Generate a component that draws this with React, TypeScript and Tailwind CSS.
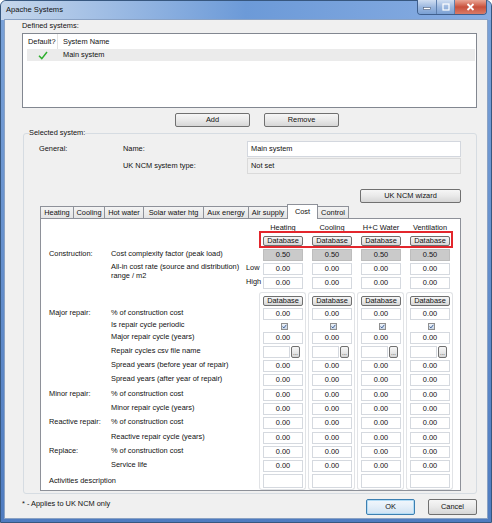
import React from 'react';

type Kind = 'header' | 'db' | 'gray' | 'val' | 'check' | 'file' | 'empty';
type Group = 'top' | 'mid' | 'bottom' | undefined;

interface CostRow {
  h: string;
  kind: Kind;
  l1?: string;
  l2?: string;
  side?: string;
  wrap?: boolean;
  group?: Group;
}

const columns = ['Heating', 'Cooling', 'H+C Water', 'Ventilation'];

// row heights follow the dialog's 14px rhythm, a few rows are a touch taller
const rows: CostRow[] = [
  { h: 'h-[14px]', kind: 'header' },
  { h: 'h-[13px]', kind: 'db' },
  { h: 'h-[14px]', kind: 'gray', l1: 'Construction:', l2: 'Cost complexity factor (peak load)' },
  { h: 'h-[14px]', kind: 'val', l2: 'All-in cost rate (source and distribution) range / m2', side: 'Low', wrap: true },
  { h: 'h-[14px]', kind: 'val', side: 'High' },
  { h: 'h-[15px] mt-[2px]', kind: 'db', group: 'top' },
  { h: 'h-[14px]', kind: 'val', l1: 'Major repair:', l2: '% of construction cost', group: 'mid' },
  { h: 'h-[10px]', kind: 'check', l2: 'Is repair cycle periodic', group: 'mid' },
  { h: 'h-[14px]', kind: 'val', l2: 'Major repair cycle (years)', group: 'mid' },
  { h: 'h-[14px]', kind: 'file', l2: 'Repair cycles csv file name', group: 'mid' },
  { h: 'h-[14.3px]', kind: 'val', l2: 'Spread years (before year of repair)', group: 'mid' },
  { h: 'h-[14.3px]', kind: 'val', l2: 'Spread years (after year of repair)', group: 'mid' },
  { h: 'h-[14.3px]', kind: 'val', l1: 'Minor repair:', l2: '% of construction cost', group: 'mid' },
  { h: 'h-[14.3px]', kind: 'val', l2: 'Minor repair cycle (years)', group: 'mid' },
  { h: 'h-[14.3px]', kind: 'val', l1: 'Reactive repair:', l2: '% of construction cost', group: 'mid' },
  { h: 'h-[14.3px]', kind: 'val', l2: 'Reactive repair cycle (years)', group: 'mid' },
  { h: 'h-[14.3px]', kind: 'val', l1: 'Replace:', l2: '% of construction cost', group: 'mid' },
  { h: 'h-[14.3px]', kind: 'val', l2: 'Service life', group: 'mid' },
  { h: 'h-[16.6px]', kind: 'empty', l1: 'Activities description', group: 'bottom' },
];

function WinButton({ className = '', children }: { className?: string; children: React.ReactNode }) {
  return (
    <div
      className={`flex items-center justify-center rounded-[2px] border border-[#707070] bg-linear-to-b from-[#f6f6f6] via-[#e9e9e9] to-[#d6d6d6] ${className}`}
    >
      {children}
    </div>
  );
}

function CheckBox() {
  return (
    <div className="flex h-[7px] w-[7px] items-center justify-center border border-[#8f8f8f] bg-linear-to-b from-[#eef3f9] to-[#c8d5e6]">
      <svg width="5" height="5" viewBox="0 0 5 5">
        <path d="M0.6 2.6 L1.9 3.9 L4.4 0.8" stroke="#2b4f8c" strokeWidth="0.9" fill="none" />
      </svg>
    </div>
  );
}

function CellContent({ kind, col }: { kind: Kind; col: number }) {
  if (kind === 'header') {
    return <div className="w-[40px] whitespace-nowrap text-center">{columns[col]}</div>;
  }
  if (kind === 'db') {
    return <WinButton className="h-[10px] w-[40px]">Database</WinButton>;
  }
  if (kind === 'gray') {
    return (
      <div className="flex h-[12px] w-[40px] items-center justify-center border border-[#bdbdbd] bg-[#cacaca]">0.50</div>
    );
  }
  if (kind === 'val') {
    return (
      <div className="flex h-[12px] w-[40px] items-center justify-center border border-[#d5d9df] bg-white">0.00</div>
    );
  }
  if (kind === 'check') {
    return (
      <div className="flex w-[40px] justify-center pl-[3px]">
        <CheckBox />
      </div>
    );
  }
  if (kind === 'file') {
    return (
      <div className="flex w-[40px] items-center">
        <div className="h-[12px] w-[27px] border border-[#d5d9df] bg-white" />
        <WinButton className="ml-[1px] h-[12px] w-[9px] items-end pb-[1px] text-[6px] leading-none">...</WinButton>
      </div>
    );
  }
  return <div className="h-[14px] w-[40px] border border-[#d5d9df] bg-white" />;
}

function Cell({ row, col }: { row: CostRow; col: number }) {
  const content = <CellContent kind={row.kind} col={col} />;
  if (row.group === 'top') {
    return (
      <div className="mr-[2px] flex h-full w-[47px] items-start rounded-t-[3px] border-x border-t border-[#e1e3e6] pl-[3px] pt-[3px]">
        {content}
      </div>
    );
  }
  if (row.group === 'mid') {
    return (
      <div className="mr-[2px] flex h-full w-[47px] items-center border-x border-[#e1e3e6] pl-[3px]">{content}</div>
    );
  }
  if (row.group === 'bottom') {
    return (
      <div className="mr-[2px] flex h-full w-[47px] items-center rounded-b-[3px] border-x border-b border-[#e1e3e6] pl-[3px]">
        {content}
      </div>
    );
  }
  if (row.kind === 'db') {
    return <div className="mr-[2px] flex h-full w-[47px] items-start pl-[4px] pt-[1px]">{content}</div>;
  }
  return <div className="mr-[2px] flex h-full w-[47px] items-center pl-[4px]">{content}</div>;
}

function CostPanel() {
  return (
    <div className="relative ml-[1px] w-[421px] border border-[#8e9199] bg-white pl-[8px] pt-[2px]">
      {rows.map((row, i) => (
        <div key={i} className={`flex ${row.h}`}>
          <div className="flex w-[62px] shrink-0 items-center whitespace-nowrap pb-[2px]">{row.l1}</div>
          {row.wrap ? (
            <div className="w-[135px] shrink-0 self-start pt-[1px] leading-[8.5px]">{row.l2}</div>
          ) : (
            <div className="flex w-[135px] shrink-0 items-center whitespace-nowrap pb-[2px]">{row.l2}</div>
          )}
          <div className="flex w-[13px] shrink-0 items-center pb-[2px]">{row.side}</div>
          {columns.map((_, c) => (
            <Cell key={c} row={row} col={c} />
          ))}
        </div>
      ))}
      {/* highlight drawn round the first Database buttons */}
      <div className="pointer-events-none absolute left-[218px] top-[12px] h-[17px] w-[194px] border-2 border-[#e3262c]" />
    </div>
  );
}

const tabs = [
  { name: 'Heating', w: 'w-[34px]' },
  { name: 'Cooling', w: 'w-[32px]' },
  { name: 'Hot water', w: 'w-[40px]' },
  { name: 'Solar water htg', w: 'w-[61px]' },
  { name: 'Aux energy', w: 'w-[46px]' },
  { name: 'Air supply', w: 'w-[40px]' },
  { name: 'Cost', w: 'w-[31px]', active: true },
  { name: 'Control', w: 'w-[32px]' },
];

function TabStrip() {
  return (
    <div className="ml-[1px] mt-[1px] flex h-[14px] items-end">
      {tabs.map((t, i) =>
        t.active ? (
          <div
            key={t.name}
            className={`relative z-10 -mb-[1px] -ml-px flex h-[15px] items-start justify-center border border-b-0 border-[#8e9199] bg-white pt-[2px] ${t.w}`}
          >
            {t.name}
          </div>
        ) : (
          <div
            key={t.name}
            className={`flex h-[12px] items-center justify-center border border-b-0 border-[#8e9199] bg-linear-to-b from-[#f4f4f4] to-[#e4e4e4] whitespace-nowrap ${i > 0 ? '-ml-px' : ''} ${t.w}`}
          >
            {t.name}
          </div>
        )
      )}
    </div>
  );
}

function TitleButtons() {
  return (
    <div className="-mt-[1px] flex h-[15px] overflow-hidden rounded-b-[4px] border border-t-0 border-[#3f5f8d]">
      <div className="flex w-[19px] items-center justify-center border-r border-[#5d7fae] bg-linear-to-b from-[#d0def2] via-[#9cb8df] to-[#7aa0d4]">
        <svg width="8" height="8" viewBox="0 0 8 8">
          <rect x="0.5" y="4.5" width="7" height="2" fill="#fff" stroke="#4b5d78" strokeWidth="0.6" />
        </svg>
      </div>
      <div className="flex w-[18px] items-center justify-center border-r border-[#5d7fae] bg-linear-to-b from-[#d0def2] via-[#9cb8df] to-[#7aa0d4]">
        <svg width="8" height="8" viewBox="0 0 8 8">
          <rect x="1" y="1" width="6" height="6" fill="none" stroke="#fff" strokeWidth="1.2" />
        </svg>
      </div>
      <div className="flex w-[31px] items-center justify-center bg-linear-to-b from-[#e9a696] via-[#c8503c] to-[#d97a66]">
        <svg width="9" height="8" viewBox="0 0 9 8">
          <path d="M1.5 1 L7.5 7 M7.5 1 L1.5 7" stroke="#fff" strokeWidth="1.8" />
        </svg>
      </div>
    </div>
  );
}

export default function App() {
  return (
    <div className="h-[523px] w-[492px] overflow-hidden font-['Liberation_Sans',Arial,sans-serif] text-[7.4px] leading-[10px] text-[#111]">
      <div className="flex h-full flex-col rounded-t-[6px] border border-[#37577f] bg-linear-to-b from-[#7aa2d8] to-[#4f7cc0] px-[4px] pb-[4px]">
        {/* Title bar */}
        <div className="-mx-[4px] flex h-[19px] items-start justify-between rounded-t-[5px] bg-linear-to-r from-[#c6d7ec] via-[#6c9ad8] to-[#88ade2] pl-[5px] pr-[4px]">
          <div className="mt-[4px] text-[7.6px]">Apache Systems</div>
          <TitleButtons />
        </div>

        {/* Client area */}
        <div className="flex flex-1 flex-col bg-[#f0f0f0] ring-1 ring-[#8aa2c4]">
          <div className="ml-[17px] mt-[1px]">Defined systems:</div>
          <div className="ml-[17px] mt-[2px] h-[75px] w-[455px] border border-[#828790] bg-white">
            <div className="flex h-[15px] items-center">
              <div className="flex h-full w-[35px] items-center border-r border-[#e3e3e3] pl-[5px]">Default?</div>
              <div className="pl-[5px]">System Name</div>
            </div>
            <div className="ml-[4px] mr-[1px] flex h-[12px] items-center bg-[#ebebeb]">
              <div className="flex w-[31px] justify-center">
                <svg width="10" height="9" viewBox="0 0 10 9">
                  <path d="M1 4.8 L3.8 7.6 L9 1" stroke="#2dae2d" strokeWidth="1.5" fill="none" />
                </svg>
              </div>
              <div className="pl-[5px]">Main system</div>
            </div>
          </div>

          <div className="ml-[170px] mt-[5px] flex">
            <WinButton className="h-[14px] w-[75px]">Add</WinButton>
            <WinButton className="ml-[14px] h-[14px] w-[75px]">Remove</WinButton>
          </div>

          <fieldset className="ml-[18px] mt-[1px] w-[454px] rounded-[3px] border border-[#d6dce2]">
            <legend className="ml-[5px] h-[10px] px-0">Selected system:</legend>
            <div className="px-[15px] pb-[2px]">
              <div className="mt-[3px] flex h-[16px] items-center">
                <div className="w-[84px]">General:</div>
                <div className="w-[124px]">Name:</div>
                <div className="flex h-[16px] w-[214px] items-center border border-[#d3d7de] bg-white pl-[3px]">
                  Main system
                </div>
              </div>
              <div className="mt-[1px] flex h-[16px] items-center">
                <div className="w-[84px]" />
                <div className="w-[124px]">UK NCM system type:</div>
                <div className="flex h-[16px] w-[214px] items-center border border-[#dadada] bg-[#f0f0f0] pl-[3px]">
                  Not set
                </div>
              </div>
              <div className="mt-[15px] flex justify-end">
                <WinButton className="h-[14px] w-[101px]">UK NCM wizard</WinButton>
              </div>
              <TabStrip />
              <CostPanel />
            </div>
          </fieldset>

          <div className="mt-[5px] flex h-[16px] items-start pl-[17px] pr-[10px]">
            <div className="flex-1">* - Applies to UK NCM only</div>
            <div className="flex h-[16px] w-[49px] items-center justify-center rounded-[2px] border border-[#3c7fb1] bg-linear-to-b from-[#f2f7fc] via-[#e3eef8] to-[#cfe2f3] shadow-[inset_0_0_0_1px_#b3dcf5]">
              OK
            </div>
            <WinButton className="ml-[13px] h-[16px] w-[49px]">Cancel</WinButton>
          </div>
        </div>
      </div>
    </div>
  );
}
